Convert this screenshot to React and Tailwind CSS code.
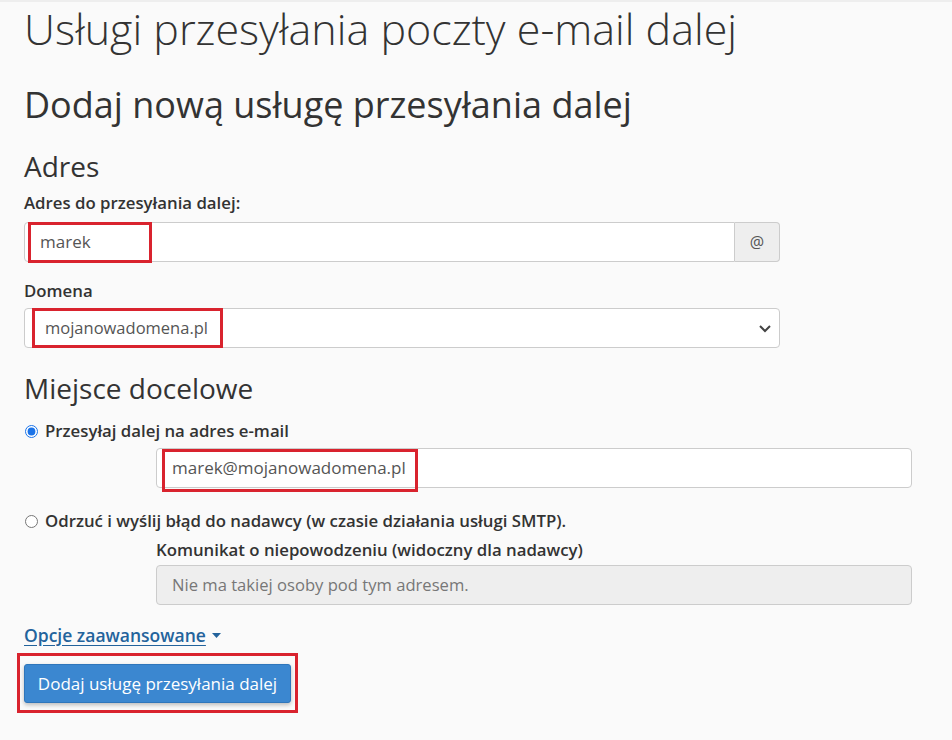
import React from "react";

function RedBox({ className }) {
  return <div className={"pointer-events-none absolute border-[3px] border-[#d9232e] " + className} />;
}

export default function App() {
  return (
    <div className="relative min-h-[740px] w-[952px] bg-[#fafafa] text-[#333] font-['Open_Sans',sans-serif]">
      <div className="h-[2px] bg-[#eeeeee]" />
      <div className="pl-[24px]">
        <h1 className="mt-[2px] text-[43px] leading-[50px] font-light text-[#333]">Usługi przesyłania poczty e-mail dalej</h1>
        <h2 className="mt-[30px] text-[36px] leading-[41px] font-normal text-[#333]">Dodaj nową usługę przesyłania dalej</h2>
        <h3 className="mt-[24px] text-[28px] leading-[34px] font-normal text-[#333]">Adres</h3>

        <label className="mt-[10px] block text-[16.8px] leading-[20px] font-semibold">Adres do przesyłania dalej:</label>
        <div className="mt-[9px] flex h-[40px] w-[756px]">
          <div className="flex flex-1 items-center rounded-l-[4px] border border-[#cccccc] bg-white pl-[15px] text-[17px] text-[#555]">marek</div>
          <div className="flex w-[45px] items-center justify-center rounded-r-[4px] border border-l-0 border-[#cccccc] bg-[#eeeeee] text-[16px] text-[#555]">@</div>
        </div>

        <label className="mt-[19px] block text-[16.8px] leading-[20px] font-semibold">Domena</label>
        <div className="mt-[7px] flex h-[40px] w-[756px] items-center justify-between rounded-[4px] border border-[#cccccc] bg-white pl-[20px] pr-[6px] text-[16.5px] text-[#555]">
          <span>mojanowadomena.pl</span>
          <svg width="14" height="10" viewBox="0 0 14 10" className="mr-[1px]">
            <path d="M2 3 L7 8 L12 3" fill="none" stroke="#444" strokeWidth="2" />
          </svg>
        </div>

        <h3 className="mt-[23px] text-[28px] leading-[34px] font-normal text-[#333]">Miejsce docelowe</h3>

        <div className="mt-[16px] flex items-center gap-[7px] text-[16.8px] leading-[20px] font-semibold">
          <input type="radio" checked readOnly className="m-0 ml-[1px] h-[13px] w-[13px] accent-[#1a73e8]" />
          <span>Przesyłaj dalej na adres e-mail</span>
        </div>
        <div className="ml-[132px] mt-[7px] flex h-[40px] w-[756px] items-center rounded-[4px] border border-[#cccccc] bg-white pl-[15px] text-[17px] text-[#555]">
          marek@mojanowadomena.pl
        </div>

        <div className="mt-[23px] flex items-center gap-[7px] text-[16.8px] leading-[20px] font-semibold">
          <input type="radio" readOnly className="m-0 ml-[1px] h-[13px] w-[13px]" />
          <span>Odrzuć i wyślij błąd do nadawcy (w czasie działania usługi SMTP).</span>
        </div>
        <label className="ml-[132px] mt-[9px] block text-[16.8px] leading-[20px] font-semibold">Komunikat o niepowodzeniu (widoczny dla nadawcy)</label>
        <div className="ml-[132px] mt-[5px] flex h-[40px] w-[756px] items-center rounded-[4px] border border-[#cccccc] bg-[#eeeeee] pl-[15px] text-[16.6px] text-[#777]">
          Nie ma takiej osoby pod tym adresem.
        </div>

        <div className="mt-[20px] flex items-center gap-[6px] text-[17.5px] leading-[20px] font-semibold text-[#23639c]">
          <span className="underline underline-offset-[3px]">Opcje zaawansowane</span>
          <svg width="9" height="5" viewBox="0 0 9 5"><path d="M0 0 L9 0 L4.5 5 Z" fill="#23639c" /></svg>
        </div>

        <button className="mt-[19px] flex h-[39px] w-[267px] items-center justify-center rounded-[3px] border border-[#2f76bb] bg-[#3b87d0] text-[17px] text-white shadow-[0_2px_4px_rgba(0,0,0,0.25)]">
          Dodaj usługę przesyłania dalej
        </button>
      </div>

      <RedBox className="left-[28px] top-[222px] h-[41px] w-[124px]" />
      <RedBox className="left-[32px] top-[308px] h-[40px] w-[191px]" />
      <RedBox className="left-[162px] top-[449px] h-[43px] w-[256px]" />
      <RedBox className="left-[17px] top-[653px] h-[60px] w-[281px]" />
    </div>
  );
}
